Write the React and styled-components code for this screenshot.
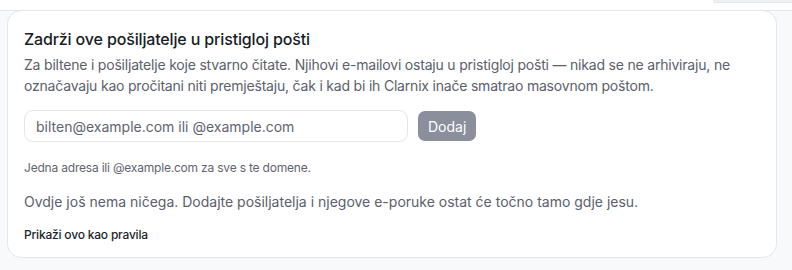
import React, { useState } from "react"
import styled, { createGlobalStyle } from "styled-components"

const GlobalStyle = createGlobalStyle`
  html, body {
    margin: 0;
    padding: 0;
    background: #f8f9fb;
  }
  body {
    font-family: Inter, "Noto Sans", sans-serif;
    -webkit-font-smoothing: antialiased;
  }
`

const Page = styled.div`
  width: 792px;
  height: 270px;
  overflow: hidden;
`

const TopStrip = styled.div`
  height: 10px;
  background: #ffffff;
  border-bottom: 1px solid #e6e8ec;
  display: flex;
  justify-content: flex-end;
`

const StripTab = styled.div`
  width: 78px;
  height: 2px;
  background: #eef0f3;
  border: 1px solid #e2e5ea;
  border-top: none;
  border-right: none;
  border-bottom-left-radius: 4px;
`

const Body = styled.div`
  padding: 0 15px 0 7px;
  margin-top: -1px;
`

const Card = styled.section`
  background: #ffffff;
  border: 1px solid #e4e6ea;
  border-radius: 14px;
  padding: 18px 16px 16px 16px;
  height: 248px;
  box-sizing: border-box;
`

const Title = styled.h3`
  margin: 0;
  font-size: 16px;
  font-weight: 500;
  color: #181c25;
  line-height: 21px;
  letter-spacing: -0.15px;
`

const Description = styled.p`
  margin: 4px 0 0;
  font-size: 14px;
  line-height: 21px;
  color: #5b606b;
  letter-spacing: -0.2px;
`

const Row = styled.form`
  display: flex;
  align-items: center;
  gap: 10px;
  margin-top: 14px;
`

const Input = styled.input`
  width: 384px;
  height: 32px;
  box-sizing: border-box;
  border: 1px solid #e2e5ea;
  border-radius: 9px;
  padding: 0 11px;
  font-family: inherit;
  font-size: 14px;
  color: #1f2430;
  outline: none;

  &::placeholder {
    color: #5f6470;
  }
`

const Button = styled.button`
  height: 30px;
  padding: 0 10px;
  border: none;
  border-radius: 7px;
  background: ${(p) => (p.disabled ? "#8a8f9b" : "#3b4252")};
  color: #ffffff;
  font-family: inherit;
  font-size: 14px;
  cursor: ${(p) => (p.disabled ? "default" : "pointer")};
`

const Hint = styled.p`
  margin: 18px 0 0;
  font-size: 12px;
  line-height: 16px;
  color: #5f6470;
  letter-spacing: -0.2px;
`

const Empty = styled.p`
  margin: 16px 0 0;
  font-size: 14px;
  line-height: 20px;
  color: #5b606b;
`

const RulesLink = styled.a`
  display: inline-block;
  margin-top: 15px;
  font-size: 12px;
  line-height: 16px;
  font-weight: 500;
  color: #1a1f2b;
  text-decoration: none;
  letter-spacing: -0.2px;
  cursor: pointer;
`

function App() {
  const [value, setValue] = useState("")

  return (
    <Page>
      <GlobalStyle />
      <TopStrip>
        <StripTab />
      </TopStrip>
      <Body>
        <Card>
          <Title>Zadrži ove pošiljatelje u pristigloj pošti</Title>
          <Description>
            Za biltene i pošiljatelje koje stvarno čitate. Njihovi e-mailovi ostaju u pristigloj pošti — nikad se ne arhiviraju, ne označavaju kao pročitani niti premještaju, čak i kad bi ih Clarnix inače smatrao masovnom poštom.
          </Description>
          <Row onSubmit={(e) => e.preventDefault()}>
            <Input
              value={value}
              onChange={(e) => setValue(e.target.value)}
              placeholder="bilten@example.com ili @example.com"
            />
            <Button type="submit" disabled={!value.trim()}>
              Dodaj
            </Button>
          </Row>
          <Hint>Jedna adresa ili @example.com za sve s te domene.</Hint>
          <Empty>
            Ovdje još nema ničega. Dodajte pošiljatelja i njegove e-poruke ostat će točno tamo gdje jesu.
          </Empty>
          <RulesLink>Prikaži ovo kao pravila</RulesLink>
        </Card>
      </Body>
    </Page>
  )
}

export default App
